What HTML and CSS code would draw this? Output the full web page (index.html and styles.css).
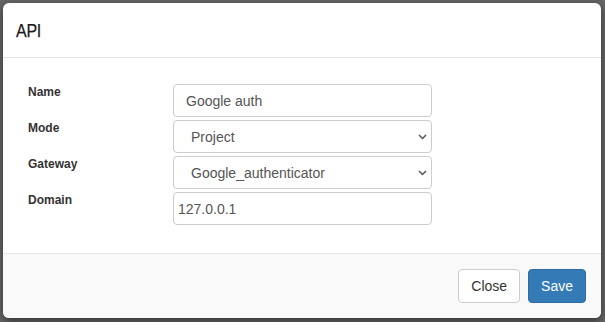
FILE: index.html
```html
<!DOCTYPE html>
<html>
<head>
<meta charset="utf-8">
<link rel="stylesheet" href="styles.css">
</head>
<body>
<div class="modal">
  <div class="modal-header">
    <h4 class="modal-title">API</h4>
  </div>
  <div class="modal-body">
    <form class="form-grid">
      <label class="lbl">Name</label>
      <input class="ctrl ctrl-name" type="text" value="Google auth">
      <label class="lbl">Mode</label>
      <div class="sel-wrap">
        <select class="ctrl ctrl-select"><option>Project</option></select>
        <svg class="chev" width="9" height="6" viewBox="0 0 9 6"><path d="M1 1 L4.5 4.5 L8 1" fill="none" stroke="#555" stroke-width="1.5"/></svg>
      </div>
      <label class="lbl">Gateway</label>
      <div class="sel-wrap">
        <select class="ctrl ctrl-select"><option>Google_authenticator</option></select>
        <svg class="chev" width="9" height="6" viewBox="0 0 9 6"><path d="M1 1 L4.5 4.5 L8 1" fill="none" stroke="#555" stroke-width="1.5"/></svg>
      </div>
      <label class="lbl">Domain</label>
      <input class="ctrl ctrl-domain" type="text" value="127.0.0.1">
    </form>
  </div>
  <div class="modal-footer">
    <button class="btn btn-default" type="button">Close</button>
    <button class="btn btn-primary" type="button">Save</button>
  </div>
</div>
</body>
</html>
```

FILE: styles.css
```css
html, body {
  margin: 0;
  padding: 0;
}
body {
  background: #656565;
  width: 605px;
  height: 322px;
  overflow: hidden;
  padding: 3px 0 0 3px;
  box-sizing: border-box;
  font-family: "Liberation Sans", Arial, sans-serif;
  color: #333;
}
.modal {
  width: 598px;
  height: 315px;
  background: #fff;
  border-radius: 6px;
  box-shadow: 0 3px 9px rgba(0,0,0,.5);
  overflow: hidden;
  display: flex;
  flex-direction: column;
}
.modal-header {
  height: 55px;
  box-sizing: border-box;
  border-bottom: 1px solid #e5e5e5;
  padding: 15px 13px;
}
.modal-title {
  margin: 0;
  font-size: 19px;
  line-height: 25px;
  font-weight: normal;
  letter-spacing: -0.3px;
  color: #1a1a1a;
  -webkit-text-stroke: 0.25px #1a1a1a;
  transform: scaleX(0.84);
  transform-origin: left center;
}
.modal-body {
  flex: 1;
  padding: 26px 15px 0 25px;
}
.form-grid {
  display: grid;
  grid-template-columns: 145px 259px;
  grid-auto-rows: 33px;
  row-gap: 3px;
  margin: 0;
}
.lbl {
  font-size: 12px;
  font-weight: bold;
  line-height: 17px;
  color: #333;
}
.ctrl {
  box-sizing: border-box;
  width: 259px;
  height: 33px;
  border: 1px solid #ccc;
  border-radius: 4px;
  background: #fff;
  font-family: "Liberation Sans", Arial, sans-serif;
  font-size: 14px;
  color: #555;
  margin: 0;
  outline: none;
}
.ctrl-name {
  padding: 0 12px;
}
.ctrl-domain {
  padding: 0 4px;
}
.sel-wrap {
  position: relative;
  width: 259px;
  height: 33px;
}
.ctrl-select {
  appearance: none;
  -webkit-appearance: none;
  padding: 0 17px;
}
.chev {
  position: absolute;
  right: 5px;
  top: 14px;
}
.modal-footer {
  height: 65px;
  box-sizing: border-box;
  background: #f9f9f9;
  border-top: 1px solid #e5e5e5;
  padding: 15px 15px;
  display: flex;
  justify-content: flex-end;
  gap: 8px;
}
.btn {
  height: 34px;
  box-sizing: border-box;
  padding: 0 12px;
  font-family: "Liberation Sans", Arial, sans-serif;
  font-size: 14px;
  border-radius: 4px;
  border: 1px solid;
  cursor: pointer;
}
.btn-default {
  background: #fff;
  color: #333;
  border-color: #ccc;
}
.btn-primary {
  background: #337ab7;
  color: #fff;
  border-color: #2e6da4;
}
```
